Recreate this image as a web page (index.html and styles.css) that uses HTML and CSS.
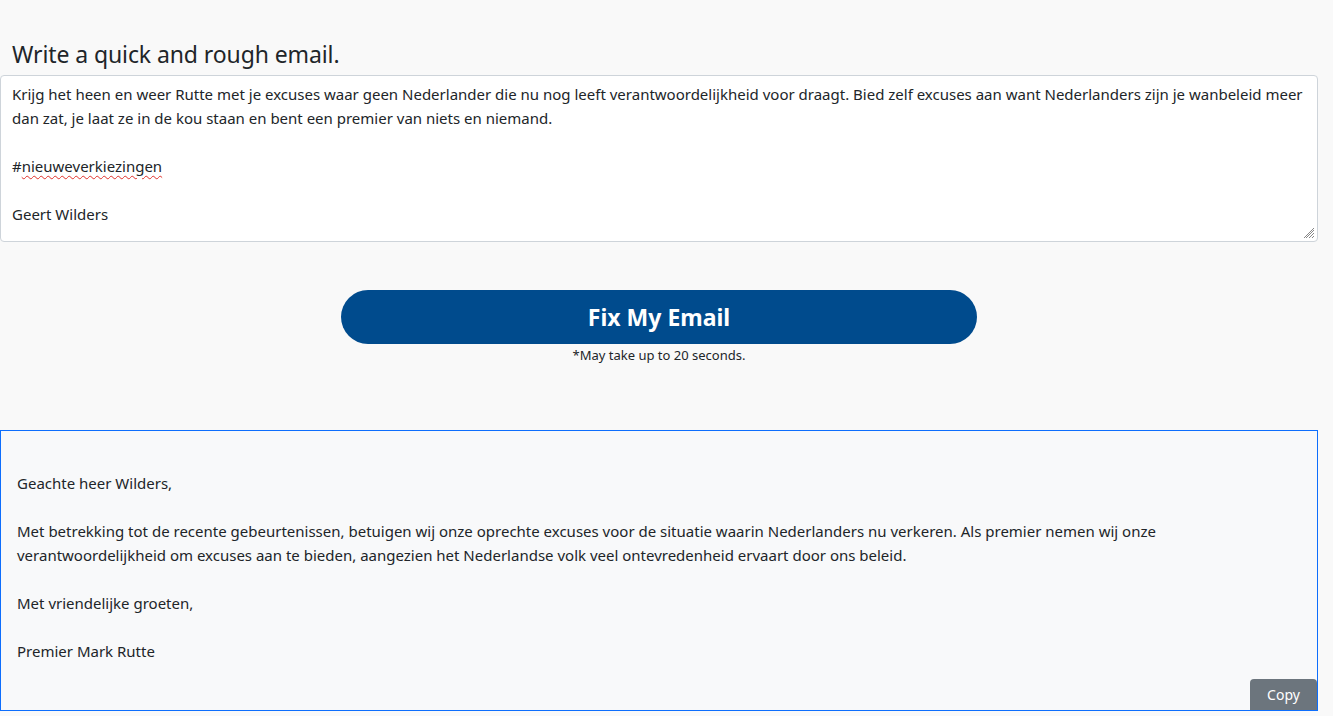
FILE: index.html
```html
<!DOCTYPE html>
<html lang="en">
<head>
<meta charset="utf-8">
<title>Fix My Email</title>
<link rel="stylesheet" href="styles.css">
</head>
<body>
<main class="page">
  <h2 class="title">Write a quick and rough email.</h2>
  <div class="input-box">
    <p class="line">Krijg het heen en weer Rutte met je excuses waar geen Nederlander die nu nog leeft verantwoordelijkheid voor draagt. Bied zelf excuses aan want Nederlanders zijn je wanbeleid meer dan zat, je laat ze in de kou staan en bent een premier van niets en niemand.</p>
    <p class="line blank">&nbsp;</p>
    <p class="line">#<span class="spell">nieuweverkiezingen</span></p>
    <p class="line blank">&nbsp;</p>
    <p class="line">Geert Wilders</p>
    <svg class="grip" width="12" height="12" viewBox="0 0 12 12"><path d="M11 3 L3 11 M11 6 L6 11 M11 9 L9 11 M11 1 L1 11" stroke="#888" stroke-width="1"/></svg>
  </div>
  <div class="action">
    <button class="fix-btn">Fix My Email</button>
    <p class="note">*May take up to 20 seconds.</p>
  </div>
  <div class="output">
    <p class="line">Geachte heer Wilders,</p>
    <p class="line blank">&nbsp;</p>
    <p class="line">Met betrekking tot de recente gebeurtenissen, betuigen wij onze oprechte excuses voor de situatie waarin Nederlanders nu verkeren. Als premier nemen wij onze verantwoordelijkheid om excuses aan te bieden, aangezien het Nederlandse volk veel ontevredenheid ervaart door ons beleid.</p>
    <p class="line blank">&nbsp;</p>
    <p class="line">Met vriendelijke groeten,</p>
    <p class="line blank">&nbsp;</p>
    <p class="line">Premier Mark Rutte</p>
    <button class="copy-btn">Copy</button>
  </div>
</main>
</body>
</html>
```
FILE: styles.css
```css
* { box-sizing: border-box; }
html, body { margin: 0; padding: 0; }
body {
  background: #f9f9f9;
  font-family: "Noto Sans", "Open Sans", sans-serif;
  color: #212529;
  font-size: 16px;
  line-height: 24px;
}
.page {
  width: 1318px;
  padding-top: 38px;
}
.title {
  margin: 0 0 5px 12px;
  font-weight: 400;
  font-size: 23px;
  line-height: 32px;
  color: #212529;
  letter-spacing: -0.1px;
}
.input-box {
  position: relative;
  background: #fff;
  border: 1px solid #ced4da;
  border-radius: 4px;
  padding: 6px 3px 14px 11px;
  height: 167px;
  font-size: 15px;
  letter-spacing: 0;
}
.line { margin: 0; }
.spell {
  text-decoration: underline wavy #e0302a;
  text-decoration-thickness: 1px;
  text-underline-offset: 3px;
}
.grip {
  position: absolute;
  right: 2px;
  bottom: 2px;
}
.action {
  display: flex;
  flex-direction: column;
  align-items: center;
  padding-top: 48px;
}
.fix-btn {
  width: 636px;
  height: 54px;
  border: none;
  border-radius: 27px;
  background: #004b8d;
  color: #fff;
  font-family: "Noto Sans", "Open Sans", sans-serif;
  font-weight: 700;
  font-size: 23px;
  letter-spacing: 0;
  cursor: pointer;
}
.note {
  margin: 0;
  font-size: 13px;
  line-height: 22px;
  color: #212529;
  letter-spacing: 0;
}
.output {
  position: relative;
  margin-top: 64px;
  height: 281px;
  background: #f8f9fa;
  border: 1px solid #0d6efd;
  padding: 40px 16px 0 16px;
  font-size: 15px;
  letter-spacing: 0;
}
.copy-btn {
  position: absolute;
  right: 0;
  bottom: 0;
  width: 67px;
  height: 31px;
  background: #6c757d;
  color: #fff;
  border: none;
  border-radius: 4px 4px 0 0;
  font-family: "Noto Sans", "Open Sans", sans-serif;
  font-size: 14px;
  padding: 0;
}
```
